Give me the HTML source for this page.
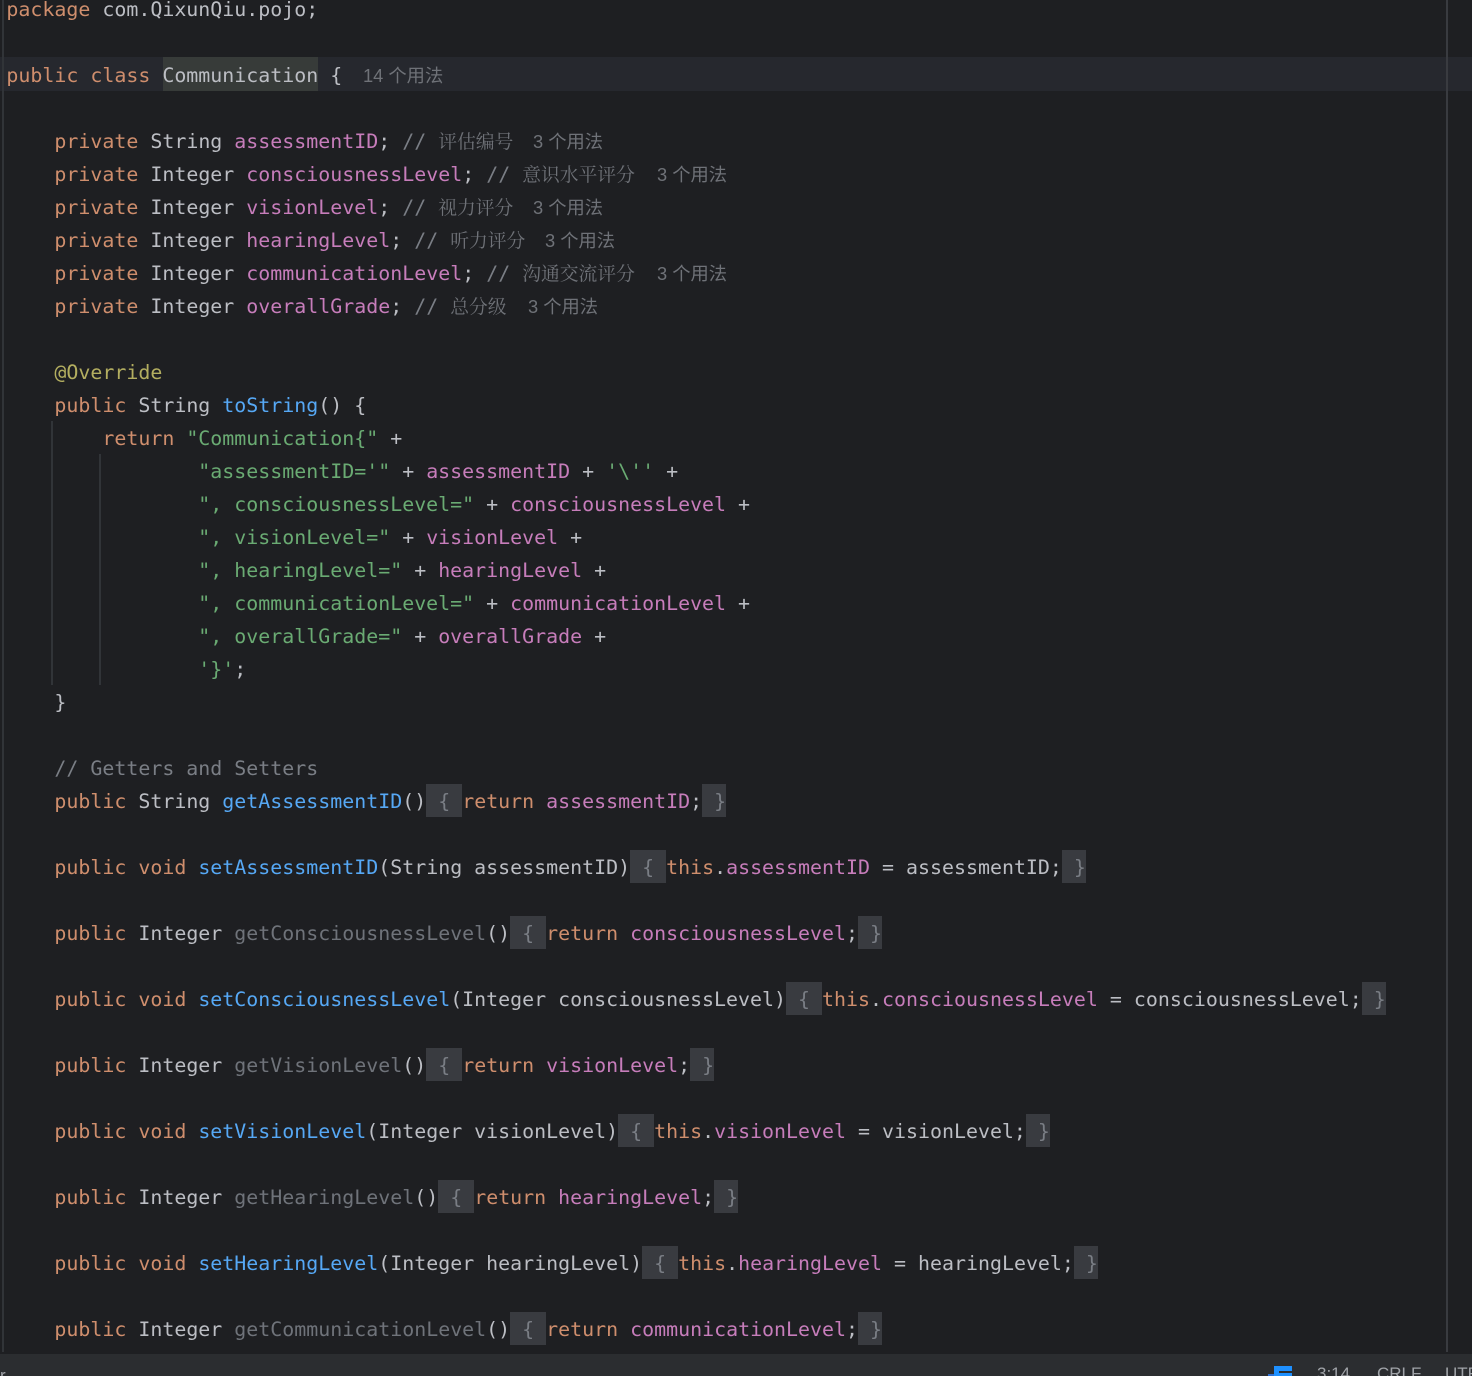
<!DOCTYPE html>
<html><head><meta charset="utf-8"><style>
html,body{margin:0;padding:0;background:#1e1f22}
#p{position:relative;width:1472px;height:1376px;overflow:hidden;background:#1e1f22;font-family:"DejaVu Sans Mono","Liberation Mono",monospace;font-size:19.93px;color:#bcbec4}
.l{position:absolute;left:6.4px;height:33px;line-height:37px;white-space:pre}
.k{color:#cf8e6d}.f{color:#c77dbb}.s{color:#6aab73}.m{color:#56a8f5}.c{color:#7a7e85}.u{color:#6f737a}.a{color:#b3ae60}
.z{font-family:"Noto Serif CJK SC",serif;font-size:18.8px;line-height:1;color:#6f7278}
.h{position:absolute;font-family:"Liberation Sans","Noto Sans CJK SC",sans-serif;font-size:18.3px;color:#6f7278;white-space:pre;top:0}
.b{display:inline-block;height:33px;line-height:35px;margin-top:1px;vertical-align:top;background:#393b40;color:#7a7e85}
.v{position:absolute;background:#313438;width:2px}
</style></head><body><div id="p">
<div style="position:absolute;left:0;top:57px;width:1472px;height:34px;background:#26282e"></div>
<div style="position:absolute;left:163px;top:57px;width:155px;height:34px;background:#373b39"></div>
<div class="v" style="left:2px;top:0;height:1352px"></div>
<div class="v" style="left:1446px;top:0;height:1352px;background:#393b40"></div>
<div class="v" style="left:51px;top:421px;height:264px"></div>
<div class="v" style="left:99px;top:454px;height:231px"></div>

<div class="l" style="top:-9px"><span class="k">package</span> com.QixunQiu.pojo;</div>
<div class="l" style="top:57px"><span class="k">public class</span> Communication {<span class="h" style="left:356.6px">14 个用法</span></div>

<div class="l" style="top:123px">    <span class="k">private</span> String <span class="f">assessmentID</span>; <span class="c">// </span><span class="z">评估编号</span><span class="h" style="left:526.6px">3 个用法</span></div>
<div class="l" style="top:156px">    <span class="k">private</span> Integer <span class="f">consciousnessLevel</span>; <span class="c">// </span><span class="z">意识水平评分</span><span class="h" style="left:650.6px">3 个用法</span></div>
<div class="l" style="top:189px">    <span class="k">private</span> Integer <span class="f">visionLevel</span>; <span class="c">// </span><span class="z">视力评分</span><span class="h" style="left:526.6px">3 个用法</span></div>
<div class="l" style="top:222px">    <span class="k">private</span> Integer <span class="f">hearingLevel</span>; <span class="c">// </span><span class="z">听力评分</span><span class="h" style="left:538.6px">3 个用法</span></div>
<div class="l" style="top:255px">    <span class="k">private</span> Integer <span class="f">communicationLevel</span>; <span class="c">// </span><span class="z">沟通交流评分</span><span class="h" style="left:650.6px">3 个用法</span></div>
<div class="l" style="top:288px">    <span class="k">private</span> Integer <span class="f">overallGrade</span>; <span class="c">// </span><span class="z">总分级</span><span class="h" style="left:521.6px">3 个用法</span></div>

<div class="l" style="top:354px">    <span class="a">@Override</span></div>
<div class="l" style="top:387px">    <span class="k">public</span> String <span class="m">toString</span>() {</div>
<div class="l" style="top:420px">        <span class="k">return</span> <span class="s">"Communication{"</span> +</div>
<div class="l" style="top:453px">                <span class="s">"assessmentID='"</span> + <span class="f">assessmentID</span> + <span class="s">'\''</span> +</div>
<div class="l" style="top:486px">                <span class="s">", consciousnessLevel="</span> + <span class="f">consciousnessLevel</span> +</div>
<div class="l" style="top:519px">                <span class="s">", visionLevel="</span> + <span class="f">visionLevel</span> +</div>
<div class="l" style="top:552px">                <span class="s">", hearingLevel="</span> + <span class="f">hearingLevel</span> +</div>
<div class="l" style="top:585px">                <span class="s">", communicationLevel="</span> + <span class="f">communicationLevel</span> +</div>
<div class="l" style="top:618px">                <span class="s">", overallGrade="</span> + <span class="f">overallGrade</span> +</div>
<div class="l" style="top:651px">                <span class="s">'}'</span>;</div>
<div class="l" style="top:684px">    }</div>

<div class="l" style="top:750px">    <span class="c">// Getters and Setters</span></div>
<div class="l" style="top:783px">    <span class="k">public</span> String <span class="m">getAssessmentID</span>()<span class="b"> { </span><span class="k">return</span> <span class="f">assessmentID</span>;<span class="b"> }</span></div>
<div class="l" style="top:849px">    <span class="k">public void</span> <span class="m">setAssessmentID</span>(String assessmentID)<span class="b"> { </span><span class="k">this</span>.<span class="f">assessmentID</span> = assessmentID;<span class="b"> }</span></div>
<div class="l" style="top:915px">    <span class="k">public</span> Integer <span class="u">getConsciousnessLevel</span>()<span class="b"> { </span><span class="k">return</span> <span class="f">consciousnessLevel</span>;<span class="b"> }</span></div>
<div class="l" style="top:981px">    <span class="k">public void</span> <span class="m">setConsciousnessLevel</span>(Integer consciousnessLevel)<span class="b"> { </span><span class="k">this</span>.<span class="f">consciousnessLevel</span> = consciousnessLevel;<span class="b"> }</span></div>
<div class="l" style="top:1047px">    <span class="k">public</span> Integer <span class="u">getVisionLevel</span>()<span class="b"> { </span><span class="k">return</span> <span class="f">visionLevel</span>;<span class="b"> }</span></div>
<div class="l" style="top:1113px">    <span class="k">public void</span> <span class="m">setVisionLevel</span>(Integer visionLevel)<span class="b"> { </span><span class="k">this</span>.<span class="f">visionLevel</span> = visionLevel;<span class="b"> }</span></div>
<div class="l" style="top:1179px">    <span class="k">public</span> Integer <span class="u">getHearingLevel</span>()<span class="b"> { </span><span class="k">return</span> <span class="f">hearingLevel</span>;<span class="b"> }</span></div>
<div class="l" style="top:1245px">    <span class="k">public void</span> <span class="m">setHearingLevel</span>(Integer hearingLevel)<span class="b"> { </span><span class="k">this</span>.<span class="f">hearingLevel</span> = hearingLevel;<span class="b"> }</span></div>
<div class="l" style="top:1311px">    <span class="k">public</span> Integer <span class="u">getCommunicationLevel</span>()<span class="b"> { </span><span class="k">return</span> <span class="f">communicationLevel</span>;<span class="b"> }</span></div>

<div style="position:absolute;left:0;top:1354px;width:1472px;height:22px;background:#2b2d30;overflow:hidden;font-family:'Liberation Sans',sans-serif;font-size:17px;color:#a0a3a8">
<span style="position:absolute;left:0;top:12px">r</span>
<div style="position:absolute;left:1274px;top:12px;width:18px;height:10px;background:#1e90ff"></div>
<div style="position:absolute;left:1279px;top:17px;width:13px;height:2px;background:#2b2d30"></div>
<div style="position:absolute;left:1268px;top:20px;width:6px;height:2px;background:#2f6fd0"></div>
<span style="position:absolute;left:1317px;top:10px">3:14</span>
<span style="position:absolute;left:1377px;top:10px">CRLF</span>
<span style="position:absolute;left:1445px;top:10px">UTF</span>
</div>
</div></body></html>
